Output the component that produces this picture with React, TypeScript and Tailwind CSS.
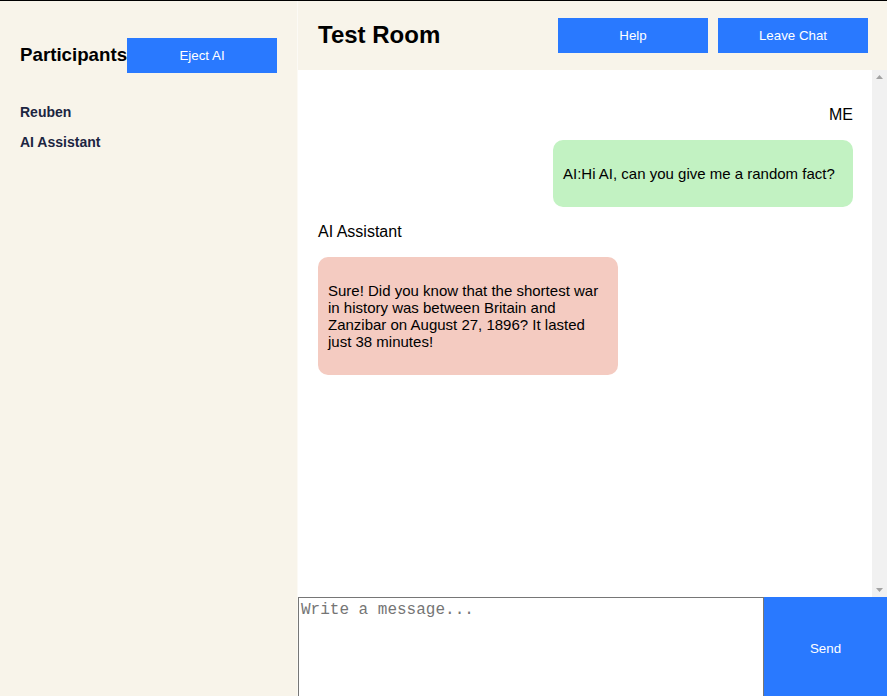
import React from "react";

const PARTICIPANTS = ["Reuben", "AI Assistant"];

type Msg = { sender: string; text: string; mine: boolean };

const MESSAGES: Msg[] = [
  { sender: "ME", text: "AI:Hi AI, can you give me a random fact?", mine: true },
  {
    sender: "AI Assistant",
    text: "Sure! Did you know that the shortest war in history was between Britain and Zanzibar on August 27, 1896? It lasted just 38 minutes!",
    mine: false,
  },
];

function Bubble({ msg }: { msg: Msg }) {
  return (
    <div className={msg.mine ? "flex flex-col items-end" : "flex flex-col items-start"}>
      <div className="mt-[16px] mb-[16px] text-[16px] leading-[18px] text-black">{msg.sender}</div>
      <div
        className={
          msg.mine
            ? "w-[300px] rounded-[10px] bg-[#c2f2c2] p-[10px]"
            : "w-[300px] rounded-[10px] bg-[#f4cbc1] p-[10px]"
        }
      >
        <p className="my-[15px] text-[15px] leading-[17px] text-black">{msg.text}</p>
      </div>
    </div>
  );
}

// classic scrollbar look, drawn since the headless browser uses overlay bars
function FakeScrollbar() {
  return (
    <div className="flex w-[15px] shrink-0 flex-col items-center justify-between bg-[#f1f1f1] py-[5px]">
      <svg width="7" height="4" viewBox="0 0 7 4">
        <path d="M3.5 0L7 4H0z" fill="#a3a3a3" />
      </svg>
      <svg width="7" height="4" viewBox="0 0 7 4">
        <path d="M0 0h7L3.5 4z" fill="#a3a3a3" />
      </svg>
    </div>
  );
}

export default function App() {
  return (
    <div className="flex h-[696px] w-full overflow-hidden border-t border-black bg-[#f8f4ea] font-['Liberation_Sans',Arial,sans-serif]">
      {/* sidebar */}
      <aside className="w-[298px] shrink-0 border-r border-[#fcfaf5] px-5 pt-[37px]">
        <div className="flex items-center">
          <h3 className="text-[18.72px] font-bold text-black">Participants</h3>
          <button className="h-[35px] w-[150px] bg-[#2979ff] text-[13.33px] text-white">Eject AI</button>
        </div>
        <ul className="mt-[31px] flex flex-col gap-[13px]">
          {PARTICIPANTS.map((p) => (
            <li key={p} className="text-[14px] font-bold leading-[17px] text-[#1c2541]">
              {p}
            </li>
          ))}
        </ul>
      </aside>

      {/* main */}
      <main className="flex min-w-0 flex-1 flex-col">
        <header className="flex h-[69px] shrink-0 items-center justify-between pl-5 pr-[19px]">
          <h2 className="-mt-[2px] text-[24px] font-bold text-black">Test Room</h2>
          <div className="flex gap-[10px]">
            <button className="h-[35px] w-[150px] bg-[#2979ff] text-[13.33px] text-white">Help</button>
            <button className="h-[35px] w-[150px] bg-[#2979ff] text-[13.33px] text-white">Leave Chat</button>
          </div>
        </header>

        <section className="flex h-[527px] shrink-0 bg-white">
          <div className="min-w-0 flex-1 overflow-hidden pl-5 pr-[19px] pt-5">
            {MESSAGES.map((m, i) => (
              <Bubble key={i} msg={m} />
            ))}
          </div>
          <FakeScrollbar />
        </section>

        <div className="flex h-[103px] shrink-0">
          <textarea
            placeholder="Write a message..."
            className="flex-1 resize-none border border-[#767676] bg-white px-[2px] pt-[3px] font-['Liberation_Mono',monospace] text-[16px] leading-[18px] placeholder:text-[#757575] focus:outline-none"
          />
          <button className="w-[123px] bg-[#2979ff] text-[13.33px] text-white">Send</button>
        </div>
      </main>
    </div>
  );
}
